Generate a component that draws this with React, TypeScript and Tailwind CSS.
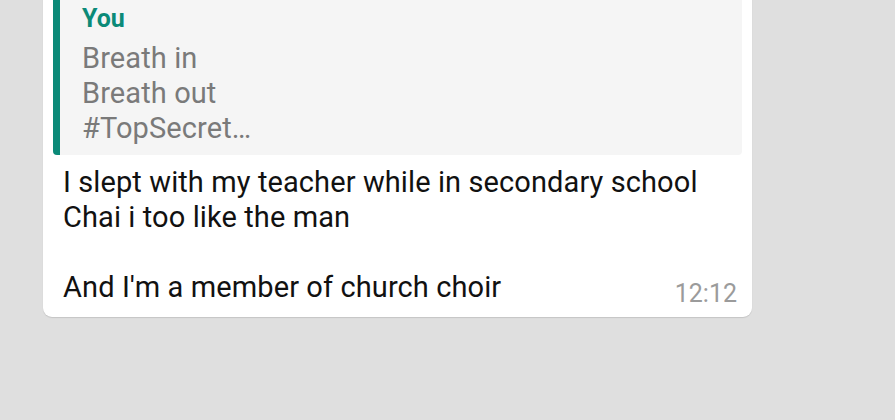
const font = { fontFamily: 'Roboto, "Noto Sans", sans-serif' };

const ReplyQuote = () => (
  <div className="flex rounded-[4px] bg-[#f5f5f5] overflow-hidden">
    <div className="w-[7px] shrink-0 bg-[#0b8a78]" />
    <div className="pl-[22px] pt-[8px] pb-[9px]">
      <div className="text-[25px] leading-[30px] font-bold text-[#0b8a78]">You</div>
      <div className="mt-[7px] text-[29px] leading-[35px] tracking-[0.1px] text-[#7a7a7a]">
        <div>Breath in</div>
        <div>Breath out</div>
        <div>#TopSecret…</div>
      </div>
    </div>
  </div>
);

export default function App() {
  return (
    <div className="w-[895px] h-[420px] overflow-hidden bg-[#dfdfdf]" style={font}>
      <div className="relative ml-[43px] -mt-[14px] w-[709px] rounded-[9px] rounded-tl-none bg-white px-[10px] pt-[10px] pb-[12px] shadow-[0_1px_1px_rgba(0,0,0,0.12)]">
        <div className="absolute -left-[5px] top-0 w-0 h-0 border-t-[12px] border-t-white border-l-[5px] border-l-transparent" />
        <ReplyQuote />
        <div className="mt-[10px] pl-[10px] pr-[5px] text-[29px] leading-[35px] tracking-[0.1px] text-[#111111]">
          <div>I slept with my teacher while in secondary school</div>
          <div>Chai i too like the man</div>
          <div className="h-[35px]" />
          <div className="flex items-end justify-between">
            <span>And I'm a member of church choir</span>
            <span className="text-[25px] leading-[22px] tracking-normal text-[#9b9b9b]">12:12</span>
          </div>
        </div>
      </div>
    </div>
  );
}
